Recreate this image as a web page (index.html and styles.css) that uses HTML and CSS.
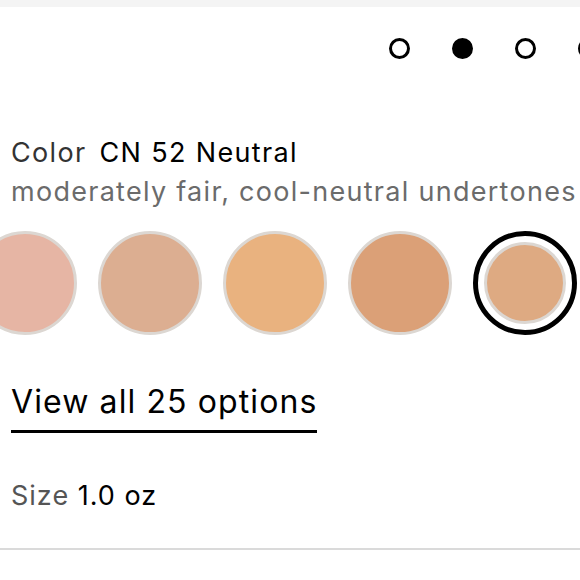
FILE: index.html
```html
<!DOCTYPE html>
<html>
<head>
<meta charset="utf-8">
<link rel="stylesheet" href="styles.css">
</head>
<body>
<div class="topbar"></div>
<div class="panel">
  <div class="dots">
    <span class="dot"></span>
    <span class="dot active"></span>
    <span class="dot"></span>
    <span class="dot"></span>
  </div>
  <div class="color-info">
    <div class="title"><span class="label">Color</span> <span class="value">CN 52 Neutral</span></div>
    <div class="desc">moderately fair, cool-neutral undertones</div>
  </div>
  <div class="swatches">
    <span class="swatch s1"></span>
    <span class="swatch s2"></span>
    <span class="swatch s3"></span>
    <span class="swatch s4"></span>
    <span class="swatch selected"><span class="inner s5"></span></span>
  </div>
  <div class="view-all"><a class="view-link">View all 25 options</a></div>
  <div class="size"><span class="label">Size</span> <span class="value">1.0 oz</span></div>
</div>
</body>
</html>
```
FILE: styles.css
```css
html, body {
  margin: 0;
  padding: 0;
  background: #fff;
}
body {
  font-family: Inter, "Liberation Sans", sans-serif;
  color: #000;
}
.topbar {
  height: 7px;
  background: #f4f4f4;
}
.panel {
  overflow: hidden;
  border-bottom: 2px solid #dadada;
  height: 543px;
  box-sizing: border-box;
}
.dots {
  display: flex;
  gap: 42px;
  margin-left: 389px;
  padding-top: 31px;
  width: 400px;
}
.dot {
  flex: none;
  width: 21px;
  height: 21px;
  box-sizing: border-box;
  border: 3px solid #000;
  border-radius: 50%;
}
.dot.active {
  background: #000;
}
.color-info {
  margin: 75px 0 0 11px;
}
.title {
  font-size: 27px;
  line-height: 38px;
  letter-spacing: 1.35px;
  white-space: nowrap;
}
.title .label {
  color: #333;
  margin-right: 4px;
}
.desc {
  font-size: 27px;
  line-height: 39px;
  letter-spacing: 1.28px;
  color: #6b6b6b;
  white-space: nowrap;
}
.swatches {
  display: flex;
  gap: 21px;
  margin: 20px 0 0 -27px;
  width: 800px;
}
.swatch {
  flex: none;
  width: 104px;
  height: 104px;
  box-sizing: border-box;
  border-radius: 50%;
  border: 3px solid #dcd7d2;
}
.s1 { background: #e6b5a4; }
.s2 { background: #dcae91; }
.s3 { background: #e9b27f; }
.s4 { background: #dba077; }
.s5 { background: #deaa82; }
.swatch.selected {
  border: 5px solid #000;
  background: #fff;
  display: flex;
  align-items: center;
  justify-content: center;
}
.inner {
  width: 82px;
  height: 82px;
  box-sizing: border-box;
  border-radius: 50%;
  border: 3px solid #dcd7d2;
}
.view-all {
  margin: 47px 0 0 11px;
}
.view-link {
  display: inline-block;
  font-size: 32px;
  line-height: 40px;
  letter-spacing: 1.1px;
  padding-bottom: 8px;
  border-bottom: 3px solid #000;
  color: #000;
}
.size {
  margin: 44px 0 0 11px;
  font-size: 27px;
  line-height: 38px;
  letter-spacing: 1px;
}
.size .label {
  color: #555;
}
```
